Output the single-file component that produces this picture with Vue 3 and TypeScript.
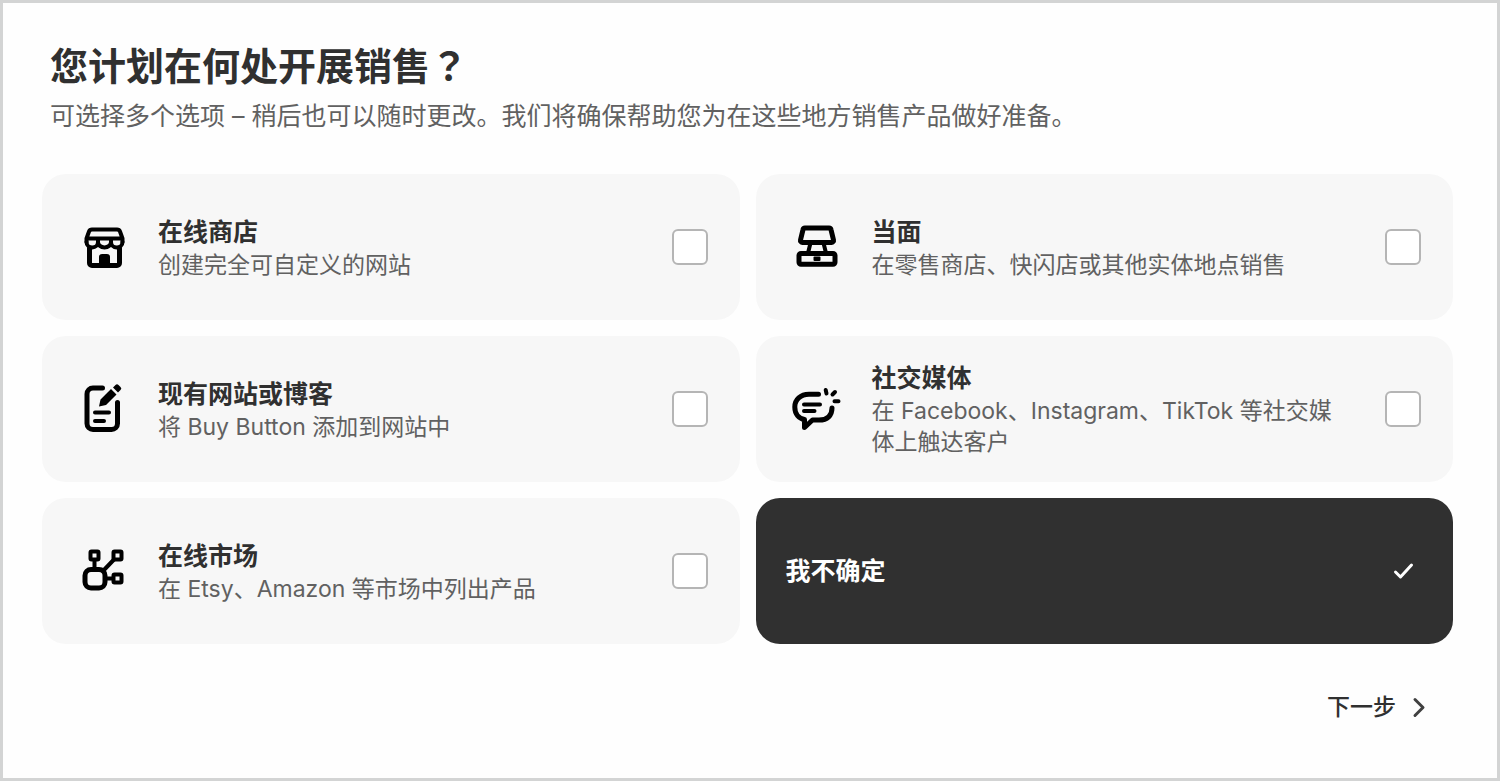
<script setup lang="ts">
import { ref } from 'vue'

type IconName = 'store' | 'register' | 'note' | 'chat' | 'nodes'

interface Channel {
  id: string
  title: string
  description?: string
  icon?: IconName
}

const channels: Channel[] = [
  { id: 'online-store', title: '在线商店', description: '创建完全可自定义的网站', icon: 'store' },
  { id: 'in-person', title: '当面', description: '在零售商店、快闪店或其他实体地点销售', icon: 'register' },
  { id: 'existing-site', title: '现有网站或博客', description: '将 Buy Button 添加到网站中', icon: 'note' },
  { id: 'social', title: '社交媒体', description: '在 Facebook、Instagram、TikTok 等社交媒体上触达客户', icon: 'chat' },
  { id: 'marketplaces', title: '在线市场', description: '在 Etsy、Amazon 等市场中列出产品', icon: 'nodes' },
  { id: 'unsure', title: '我不确定' },
]

const selected = ref<string[]>(['unsure'])
</script>

<template>
  <main class="page">
    <header class="intro">
      <h1 class="heading">您计划在何处开展销售<span class="mark">？</span></h1>
      <p class="hint">可选择多个选项 – 稍后也可以随时更改。我们将确保帮助您为在这些地方销售产品做好准备。</p>
    </header>

    <form @submit.prevent>
      <div class="grid">
        <label
          v-for="channel in channels"
          :key="channel.id"
          class="card"
          :class="{ active: selected.includes(channel.id) }"
          :for="channel.id"
        >
          <svg v-if="channel.icon" class="icon" viewBox="0 0 64 64" aria-hidden="true">
            <template v-if="channel.icon === 'store'">
              <path class="thin" d="M14.500 27v-3.500l2.500-7c.5-1.300 1.500-2 3-2h25c1.500 0 2.500.7 3 2l2.500 7V27M15 23.500h35" />
              <path class="thin" d="M14.500 27a5.750 5.500 0 0 0 11.500 0a6.500 5.500 0 0 0 13 0a5.750 5.500 0 0 0 11.500 0M26 24v3M39 24v3" />
              <path d="M17.500 33v15a2.500 2.500 0 0 0 2.500 2.500h25a2.500 2.500 0 0 0 2.500-2.500V33" />
              <path class="solid" d="M27 52V42a3 3 0 0 1 3-3h5a3 3 0 0 1 3 3v10z" />
            </template>
            <template v-else-if="channel.icon === 'register'">
              <path d="M19 13h24a2 2 0 0 1 2 1.600l2.500 10.400a2 2 0 0 1-2 2.400h-29a2 2 0 0 1-2-2.400L17 14.600A2 2 0 0 1 19 13z" />
              <path class="thin" d="M24.500 28l-2.500 10M37.500 28l2.500 10" />
              <rect x="13" y="38.500" width="36" height="10.700" rx="2" />
              <rect class="solid" x="27.500" y="41.500" width="7" height="4.500" rx="1" />
            </template>
            <template v-else-if="channel.icon === 'note'">
              <path d="M30.500 11H21a6 6 0 0 0-6 6v29.500a6 6 0 0 0 6 6h18.500a6 6 0 0 0 6-6V25.500" />
              <path class="thin" d="M23 35.500h14M23 44h9" />
              <path class="solid" d="M27 29.500l1.500-7L39 12l5.500 5.500L34 28zM41 10.500l2.500-2.500a2 2 0 0 1 3 0l2 2a2 2 0 0 1 0 3L46 15.500z" />
            </template>
            <template v-else-if="channel.icon === 'chat'">
              <path d="M32.500 17.300H23C14.500 17.300 8.800 22.800 8.800 30S13 41.500 18.500 42.500v8l8-7.500H33c8.500 0 13-4.500 13-12" />
              <path class="thin" d="M18 27.500h16M18 34h10.500M39.700 13l.8 3.500M49 15l-2.500 2.500M48.500 24.200h4" />
            </template>
            <template v-else>
              <rect x="13" y="30.500" width="20" height="18.500" rx="6" />
              <rect class="thin" x="18.500" y="12.500" width="8" height="8" rx="1" />
              <rect class="thin" x="41.500" y="12.500" width="8" height="8" rx="1" />
              <rect class="thin" x="41.500" y="35.500" width="8" height="8" rx="1" />
              <path class="thin" d="M22.500 21v9M42 20.500L31 32M33 39.500h8" />
            </template>
          </svg>
          <span class="copy">
            <span class="title">{{ channel.title }}</span>
            <span v-if="channel.description" class="description">{{ channel.description }}</span>
          </span>
          <span class="tick">
            <input :id="channel.id" v-model="selected" class="box" type="checkbox" :value="channel.id" />
            <svg v-if="selected.includes(channel.id)" class="check" viewBox="0 0 36 36" aria-hidden="true">
              <path d="M10.500 19l5 5L26.500 12" />
            </svg>
          </span>
        </label>
      </div>

      <div class="actions">
        <button class="next" type="submit">
          下一步
          <svg class="chevron" viewBox="0 0 24 24" aria-hidden="true">
            <path d="M8 4.500l8 8-8 8" />
          </svg>
        </button>
      </div>
    </form>
  </main>
</template>

<style>
body {
  margin: 0;
}
</style>

<style scoped>
.page {
  box-sizing: border-box;
  min-height: 100vh;
  padding: 38px 44px 38px 39px;
  border: 3px solid #d3d4d4;
  background: #fefefe;
  color: #303030;
  font-family: Inter, "Noto Sans CJK SC", sans-serif;
}

.intro {
  padding-left: 8px;
  margin-bottom: 33px;
}

.heading {
  margin: 0;
  font-size: 38px;
  line-height: 50px;
  font-weight: 700;
}

.mark {
  font-family: Inter, "Noto Sans CJK TC", sans-serif;
}

.hint {
  margin: 0;
  color: #616161;
  font-size: 25px;
  line-height: 50px;
}

.grid {
  display: grid;
  grid-template-columns: 1fr 1fr;
  grid-auto-rows: 1fr;
  gap: 16px;
}

.card {
  box-sizing: border-box;
  display: flex;
  align-items: center;
  min-height: 146px;
  padding: 24px 32px 24px 30px;
  border-radius: 24px;
  background: #f7f7f7;
  cursor: pointer;
}

.icon {
  flex: none;
  width: 64px;
  height: 64px;
  margin-right: 22px;
  fill: none;
  stroke: #000;
  stroke-width: 5;
  stroke-linecap: round;
  stroke-linejoin: round;
}

.thin {
  stroke-width: 4;
}

.solid {
  fill: #000;
  stroke: none;
}

.copy {
  flex: 1;
  min-width: 0;
}

.title,
.description {
  display: block;
}

.title {
  font-size: 25px;
  line-height: 36px;
  font-weight: 600;
}

.description {
  color: #616161;
  font-size: 23px;
  line-height: 31px;
}

.tick {
  flex: none;
  display: grid;
  margin-left: 32px;
}

.tick > * {
  grid-area: 1 / 1;
}

.box {
  appearance: none;
  box-sizing: border-box;
  width: 36px;
  height: 36px;
  margin: 0;
  border: 2px solid #b5b5b5;
  border-radius: 6px;
  background: #fff;
  cursor: pointer;
}

.check {
  width: 36px;
  height: 36px;
  fill: none;
  stroke: #fff;
  stroke-width: 3;
  stroke-linecap: round;
  stroke-linejoin: round;
  pointer-events: none;
}

.active {
  background: #303030;
  color: #fff;
}

.active .icon {
  stroke: #fff;
}

.active .solid {
  fill: #fff;
}

.active .description {
  color: #d6d6d6;
}

.active .box {
  border-color: transparent;
  background: transparent;
}

.actions {
  display: flex;
  justify-content: flex-end;
  padding: 45px 22px 0 0;
}

.next {
  display: flex;
  align-items: center;
  gap: 11px;
  padding: 0;
  border: 0;
  background: none;
  color: #303030;
  font: inherit;
  font-size: 23px;
  line-height: 36px;
  font-weight: 500;
  cursor: pointer;
}

.chevron {
  width: 24px;
  height: 24px;
  fill: none;
  stroke: #404040;
  stroke-width: 3;
  stroke-linecap: round;
  stroke-linejoin: round;
}
</style>
